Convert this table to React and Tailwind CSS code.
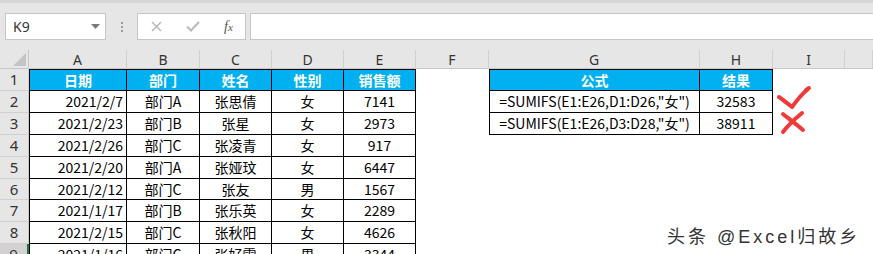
import React from "react";

const cols = [
  { key: "A", w: "w-[98px]" },
  { key: "B", w: "w-[73px]" },
  { key: "C", w: "w-[72px]" },
  { key: "D", w: "w-[72px]" },
  { key: "E", w: "w-[72px]" },
  { key: "F", w: "w-[73px]" },
  { key: "G", w: "w-[211px]" },
  { key: "H", w: "w-[73px]" },
  { key: "I", w: "w-[72px]" },
  { key: "", w: "flex-1" },
];

const rows = [
  ["2021/2/7", "部门A", "张思倩", "女", "7141"],
  ["2021/2/23", "部门B", "张星", "女", "2973"],
  ["2021/2/26", "部门C", "张凌青", "女", "917"],
  ["2021/2/20", "部门A", "张娅玟", "女", "6447"],
  ["2021/2/12", "部门C", "张友", "男", "1567"],
  ["2021/1/17", "部门B", "张乐英", "女", "2289"],
  ["2021/2/15", "部门C", "张秋阳", "女", "4626"],
  ["2021/1/16", "部门C", "张好雪", "男", "3344"],
];

const side = [
  ['=SUMIFS(E1:E26,D1:D26,"女")', "32583"],
  ['=SUMIFS(E1:E26,D3:D28,"女")', "38911"],
];

const heights = ["h-[22px]", "h-[22px]", "h-[22px]", "h-[22px]", "h-[22px]", "h-[21px]", "h-[22px]", "h-[22px]", "h-[22px]"];

function Toolbar() {
  return (
    <div className="h-[50px] bg-[#e6e6e6] border-t-[3px] border-[#d5d5d5] flex items-start pt-[10px]">
      {/* name box */}
      <div className="ml-[5px] w-[101px] h-[27px] bg-white border border-[#c6c6c6] flex items-center justify-between pl-[7px] pr-[5px]">
        <span className="text-[14px] text-[#333] font-['Noto_Sans',sans-serif]">K9</span>
        <svg width="9" height="5" viewBox="0 0 9 5">
          <path d="M0 0 L9 0 L4.5 5 Z" fill="#7a7a7a" />
        </svg>
      </div>
      <div className="w-[31px] h-[27px] flex flex-col items-center justify-center gap-[2px]">
        <span className="w-[2px] h-[2px] bg-[#9a9a9a]" />
        <span className="w-[2px] h-[2px] bg-[#9a9a9a]" />
        <span className="w-[2px] h-[2px] bg-[#9a9a9a]" />
      </div>
      {/* cancel / enter / fx */}
      <div className="w-[109px] h-[27px] bg-white border border-[#c6c6c6] flex items-center pl-[13px]">
        <svg width="11" height="11" viewBox="0 0 11 11">
          <path d="M1 1 L10 10 M10 1 L1 10" stroke="#b4b4b4" strokeWidth="1.4" />
        </svg>
        <svg className="ml-[24px]" width="14" height="11" viewBox="0 0 14 11">
          <path d="M1 5.5 L5 9.5 L13 1" stroke="#bcbcbc" strokeWidth="2.2" fill="none" />
        </svg>
        <span className="ml-[24px] text-[14px] italic text-[#555] font-['Liberation_Serif',serif] leading-none">
          f<span className="text-[11px]">x</span>
        </span>
      </div>
      <div className="ml-[4px] flex-1 h-[27px] bg-white border border-[#c6c6c6] border-r-0" />
    </div>
  );
}

function ColumnHeader() {
  return (
    <div className="flex h-[19px] bg-[#e6e6e6] border-b border-[#c8c8c8]">
      <div className="w-[29px] border-r border-[#c8c8c8] flex items-end justify-end pr-[2px] pb-[2px]">
        <svg width="13" height="13" viewBox="0 0 13 13">
          <path d="M13 0 L13 13 L0 13 Z" fill="#c4c4c4" />
        </svg>
      </div>
      {cols.map((c) => (
        <div
          key={c.key}
          className={`${c.w} border-r border-[#d0d0d0] flex items-center justify-center text-[14px] text-[#333] font-['Noto_Sans',sans-serif]`}
        >
          {c.key}
        </div>
      ))}
    </div>
  );
}

function Cell({ w, children, cls = "" }) {
  return <div className={`${w} flex items-center ${cls}`}>{children}</div>;
}

export default function App() {
  const bordered = "border-r border-b border-black";
  return (
    <div className="w-[873px] h-[254px] overflow-hidden bg-white relative font-['Noto_Sans_CJK_SC',sans-serif] text-[14px] text-black">
      <Toolbar />
      <ColumnHeader />

      {/* row 1 */}
      <div className={`flex ${heights[0]}`}>
        <div className="w-[29px] bg-[#e6e6e6] border-r border-b border-[#d0d0d0] flex items-center justify-center text-[15px] text-[#333] font-['Noto_Sans',sans-serif]">
          1
        </div>
        {["日期", "部门", "姓名", "性别", "销售额"].map((t, i) => (
          <Cell
            key={t}
            w={cols[i].w}
            cls={`${bordered} border-t bg-[#00b0f0] justify-center font-bold text-white ${i === 0 ? "border-l" : ""}`}
          >
            {t}
          </Cell>
        ))}
        <Cell w={cols[5].w} />
        <Cell w={cols[6].w} cls={`${bordered} border-t border-l bg-[#00b0f0] justify-center font-bold text-white`}>
          公式
        </Cell>
        <Cell w={cols[7].w} cls={`${bordered} border-t bg-[#00b0f0] justify-center font-bold text-white`}>
          结果
        </Cell>
        <Cell w={cols[8].w} />
        <Cell w={cols[9].w} />
      </div>

      {rows.map((r, ri) => {
        const n = ri + 2;
        const sel = n === 9;
        return (
          <div key={n} className={`flex ${heights[ri + 1]}`}>
            <div
              className={`w-[29px] border-b border-[#d0d0d0] flex items-center justify-center text-[15px] text-[#333] font-['Noto_Sans',sans-serif] ${
                sel ? "bg-[#d2d2d2] border-r-2 border-r-[#217346]" : "bg-[#e6e6e6] border-r border-r-[#c8c8c8]"
              }`}
            >
              {n}
            </div>
            <Cell w={cols[0].w} cls={`${bordered} border-l justify-end pr-[3px]`}>
              {r[0]}
            </Cell>
            {r.slice(1).map((t, i) => (
              <Cell key={i} w={cols[i + 1].w} cls={`${bordered} justify-center`}>
                {t}
              </Cell>
            ))}
            <Cell w={cols[5].w} />
            {side[ri] ? (
              <>
                <Cell w={cols[6].w} cls={`${bordered} border-l justify-center`}>
                  {side[ri][0]}
                </Cell>
                <Cell w={cols[7].w} cls={`${bordered} justify-center`}>
                  {side[ri][1]}
                </Cell>
              </>
            ) : (
              <>
                <Cell w={cols[6].w} />
                <Cell w={cols[7].w} />
              </>
            )}
            <Cell w={cols[8].w} />
            <Cell w={cols[9].w} />
          </div>
        );
      })}

      {/* hand-drawn marks */}
      <svg className="absolute left-[772px] top-[84px]" width="44" height="54" viewBox="0 0 44 54">
        <path
          d="M7 13 C10 15 15 19 20 23 C25 16 30 10 36 5 M34 6 L37 4"
          stroke="#f2393a"
          strokeWidth="4"
          strokeLinecap="round"
          strokeLinejoin="round"
          fill="none"
        />
        <path
          d="M11 30 C16 34 24 40 31 46 M30 29 C24 34 17 40 11 48"
          stroke="#f2393a"
          strokeWidth="4"
          strokeLinecap="round"
          fill="none"
        />
      </svg>

      {/* watermark */}
      <div className="absolute left-[667px] top-[224px] text-[18px] tracking-[3px] text-[#333] font-['Liberation_Sans','Noto_Sans_CJK_SC',sans-serif] [text-shadow:0_0_2px_#fff,0_0_2px_#fff]">
        头条 @Excel归故乡
      </div>
    </div>
  );
}
